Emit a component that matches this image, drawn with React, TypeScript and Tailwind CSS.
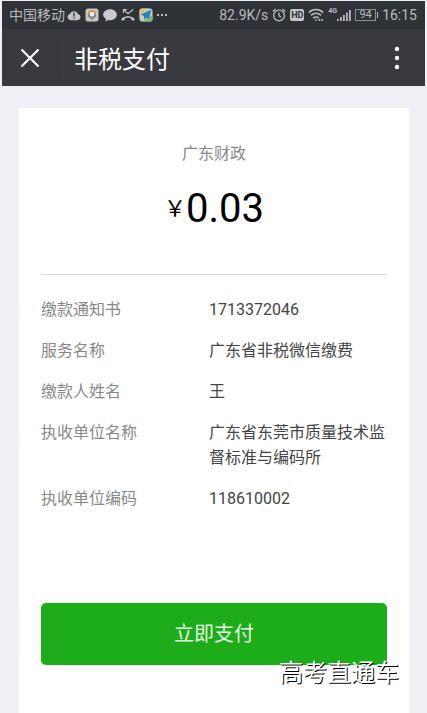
import type { ReactNode } from "react";

interface Detail {
  label: string;
  value: string;
}

const details: Detail[] = [
  { label: "缴款通知书", value: "1713372046" },
  { label: "服务名称", value: "广东省非税微信缴费" },
  { label: "缴款人姓名", value: "王" },
  { label: "执收单位名称", value: "广东省东莞市质量技术监督标准与编码所" },
  { label: "执收单位编码", value: "118610002" },
];

function Icon({ children }: { children: ReactNode }) {
  return (
    <svg viewBox="0 0 14 14" className="size-[14px] shrink-0" aria-hidden="true">
      {children}
    </svg>
  );
}

function StatusBar() {
  return (
    <div className="flex h-7 items-center justify-between bg-[#2f3236] pl-[7px] pr-2 text-sm text-[#b9bbbd]">
      <div className="flex items-center gap-0.5">
        <span>中国移动</span>
        <div className="flex items-center gap-1">
          {/* Cloud with an alert mark */}
          <Icon>
            <path d="M3.400 12.200a3.200 3.200 0 0 1-.4-6.300A4.200 4.200 0 0 1 10.900 5.900a3.200 3.200 0 0 1 0 6.300z" fill="#c3c5c7" />
            <path d="M7 4.600v3.800M7 9.400v1.400" stroke="#2f3236" strokeWidth="1.300" />
          </Icon>
          {/* Map app */}
          <Icon>
            <rect x="0.500" y="0.500" width="13" height="13" rx="2.500" fill="#c9c8c0" />
            <circle cx="7" cy="6.200" r="3.200" fill="#f0efe9" stroke="#c98a4c" strokeWidth="1.500" />
            <path d="M3.800 6.500a3.200 3.200 0 0 0 6.400 0" fill="none" stroke="#6f8797" strokeWidth="1.500" />
            <path d="M5.500 10.500h3L7 12.500z" fill="#8b7d70" />
          </Icon>
          {/* Chat bubble */}
          <Icon>
            <path d="M7 1.200c3.800 0 6.800 2.400 6.800 5.500s-3 5.500-6.800 5.500c-.6 0-1.200 0-1.700-.2L2.500 13.500l.4-2.800C1.200 9.700.2 8.300.2 6.700c0-3.100 3-5.500 6.800-5.500z" fill="#c9cbcd" />
          </Icon>
          {/* Missed call */}
          <Icon>
            <path d="M2.500 5V1.500H6M2.800 1.800 7 5.800l5.200-4.300" fill="none" stroke="#c3c5c7" strokeWidth="1.200" />
            <path d="M.6 12.700c-.5-1 .2-2.200 1.200-2.900 3-2 7.400-2 10.400 0 1 .7 1.700 1.900 1.200 2.900l-3-.6-.3-1.800c-2-.6-4.200-.6-6.200 0l-.3 1.800z" fill="#c3c5c7" />
          </Icon>
          {/* Navigation app */}
          <Icon>
            <rect x="0.500" y="0.500" width="13" height="13" rx="2.500" fill="#c5cfbf" />
            <path d="M.5 9 9 .5H3A2.500 2.500 0 0 0 .5 3z" fill="#d3c48b" />
            <path d="M4 13.500 13.500 7v4a2.500 2.500 0 0 1-2.500 2.500z" fill="#87b57d" />
            <path d="M12.300 1.800 1.800 6.500l3 1.600L5.500 12l2-2.300 2.400 1.300z" fill="#2582bd" />
          </Icon>
          <Icon>
            <g fill="#b9bbbd">
              <rect x="0" y="6" width="2" height="2" />
              <rect x="4" y="6" width="2" height="2" />
              <rect x="8" y="6" width="2" height="2" />
            </g>
          </Icon>
        </div>
      </div>

      <div className="flex items-center gap-1">
        <span>82.9K/s</span>
        {/* Alarm clock */}
        <Icon>
          <g fill="none" stroke="#b9bbbd" strokeWidth="1.300">
            <circle cx="7" cy="7.500" r="5.400" />
            <path d="M7 4.500v3.300l2 1.300M.8 3.400 3.600 1M13.200 3.400 10.400 1" />
          </g>
        </Icon>
        {/* HD voice */}
        <span className="flex h-3 w-[14px] items-center justify-center rounded-xs bg-[#c3c5c7] text-[9px] font-bold text-[#2f3236]">
          HD
        </span>
        {/* Wi-Fi */}
        <svg viewBox="0 0 16 14" className="h-[14px] w-4" aria-hidden="true">
          <g fill="none" stroke="#b9bbbd" strokeWidth="1.500">
            <path d="M.8 4.600c4-4 10.400-4 14.400 0" />
            <path d="M3 7.400c2.800-2.800 7.200-2.800 10 0" />
            <path d="M5.200 10.100c1.600-1.600 4-1.600 5.600 0" />
          </g>
          <path d="M6.500 11.500h3L8 13.200zM10.600 11h1.600v2h-1.600zM13.200 11h1.600v2h-1.600z" fill="#b9bbbd" />
        </svg>
        {/* Signal strength */}
        <div className="flex h-[14px] items-start">
          <span className="text-[7px] leading-[7px] font-bold">4G</span>
          <svg viewBox="0 0 14 14" className="size-[14px]" aria-hidden="true">
            <path d="M0 11h1.800v2H0zM3 9h1.800v4H3zM6 7h1.800v6H6zM9 4.500h1.800V13H9zM12 2h1.800v11H12z" fill="#b9bbbd" />
          </svg>
        </div>
        {/* Battery */}
        <div className="flex items-center">
          <span className="flex h-3 w-[21px] items-center justify-center border border-[#8d8f92] text-[11px] leading-3">
            94
          </span>
          <span className="ml-px h-1.5 w-px bg-[#b9bbbd]" />
        </div>
        <span>16:15</span>
      </div>
    </div>
  );
}

function TitleBar() {
  return (
    <header className="flex h-[57px] items-center bg-[#393a3f] text-white">
      <button type="button" aria-label="关闭" className="flex h-full w-14 items-center justify-center">
        <svg viewBox="0 0 20 20" className="size-5" aria-hidden="true">
          <path d="M1.500 1.500l17 17M18.500 1.500l-17 17" stroke="currentColor" strokeWidth="2.200" />
        </svg>
      </button>
      <div className="h-10 w-px bg-[#323338]" />
      <h1 className="ml-[15px] flex-1 pt-1 text-2xl font-normal">非税支付</h1>
      <button type="button" aria-label="更多" className="flex h-full w-14 items-center justify-center">
        <svg viewBox="0 0 6 24" className="h-6 w-1.5" aria-hidden="true">
          <g fill="currentColor">
            <circle cx="3" cy="3" r="2.200" />
            <circle cx="3" cy="12" r="2.200" />
            <circle cx="3" cy="21" r="2.200" />
          </g>
        </svg>
      </button>
    </header>
  );
}

export default function App() {
  return (
    <div className="relative flex min-h-screen flex-col bg-[#f0eff5] px-0.5 pt-px font-[Roboto,'Noto_Sans_CJK_SC',sans-serif]">
      <StatusBar />
      <TitleBar />

      <main className="mr-4 ml-[17px] mt-[22px] flex-1 bg-white px-[22px] pt-[33px]">
        <section className="border-b border-[#d9d9d9] pb-[43px] text-center">
          <p className="text-base leading-[25px] text-[#888]">广东财政</p>
          <p className="mt-5 flex items-center justify-center leading-[45px] text-black">
            {/* Full-width yuan sign */}
            <span className="text-[22px]">{"\uffe5"}</span>
            <span className="text-[40px]">0.03</span>
          </p>
        </section>

        <dl className="mt-[22px] flex flex-col gap-4 text-base leading-[25px]">
          {details.map((item) => (
            <div key={item.label} className="flex">
              <dt className="w-[168px] shrink-0 text-[#888]">{item.label}</dt>
              <dd className="flex-1 text-[#444]">{item.value}</dd>
            </div>
          ))}
        </dl>

        <button
          type="button"
          className="mt-[92px] h-[62px] w-full rounded-[5px] bg-[#1cad19] text-xl text-[#e6f7e6]"
        >
          立即支付
        </button>
      </main>

      {/* Source mark over the page corner */}
      <p className="absolute right-7 bottom-6 text-2xl text-white [text-shadow:1px_1px_0_#000]">
        高考直通车
      </p>
    </div>
  );
}
